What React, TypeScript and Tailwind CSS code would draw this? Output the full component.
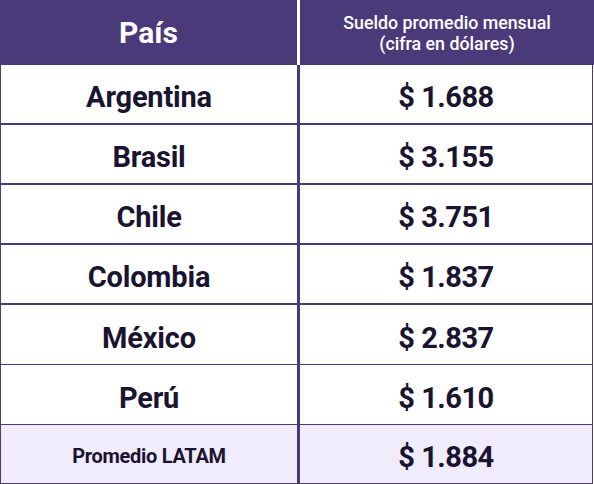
const rows = [
  { country: "Argentina", salary: "$ 1.688", thick: true },
  { country: "Brasil", salary: "$ 3.155", thick: true },
  { country: "Chile", salary: "$ 3.751", thick: true },
  { country: "Colombia", salary: "$ 1.837", thick: true },
  { country: "México", salary: "$ 2.837", thick: false },
  { country: "Perú", salary: "$ 1.610", thick: false },
];

export default function App() {
  return (
    <div className="w-[594px] h-[484px] bg-white font-['Roboto',sans-serif] text-[#1b1430]">
      {/* header */}
      <div className="flex h-[65px]">
        <div className="w-[297px] bg-[#4b3a7a] flex items-center justify-center text-white text-[30px] font-bold">
          País
        </div>
        <div className="w-[3px] bg-white" />
        <div className="w-[294px] bg-[#4b3a7a] flex flex-col items-center justify-center text-white text-[17.8px] font-medium leading-[21px]">
          <span>Sueldo promedio mensual</span>
          <span>(cifra en dólares)</span>
        </div>
      </div>

      <div className="w-[593px] border-l border-r border-[#4b3a7a]">
        {rows.map((row, i) => (
          <div key={i} className={`flex h-[60px] border-[#4b3a7a] ${row.thick ? "border-b-2" : "border-b"}`}>
            <div className="w-[296px] flex items-center justify-center pt-2 text-[29px] font-bold tracking-[-0.2px]">
              {row.country}
            </div>
            <div className="w-[3px] bg-[#4b3a7a]" />
            <div className="flex-1 flex items-center justify-center pt-2 text-[29px] font-bold tracking-[-0.5px]">
              {row.salary}
            </div>
          </div>
        ))}
        {/* average row */}
        <div className="flex h-[59px] border-b border-[#4b3a7a] bg-[#f1ecfb]">
          <div className="w-[296px] flex items-center justify-center pt-1 text-[20px] font-bold tracking-[-0.3px]">
            Promedio LATAM
          </div>
          <div className="w-[3px] bg-[#4b3a7a]" />
          <div className="flex-1 flex items-center justify-center pt-2 text-[29px] font-bold tracking-[-0.5px]">
            $ 1.884
          </div>
        </div>
      </div>
    </div>
  );
}
